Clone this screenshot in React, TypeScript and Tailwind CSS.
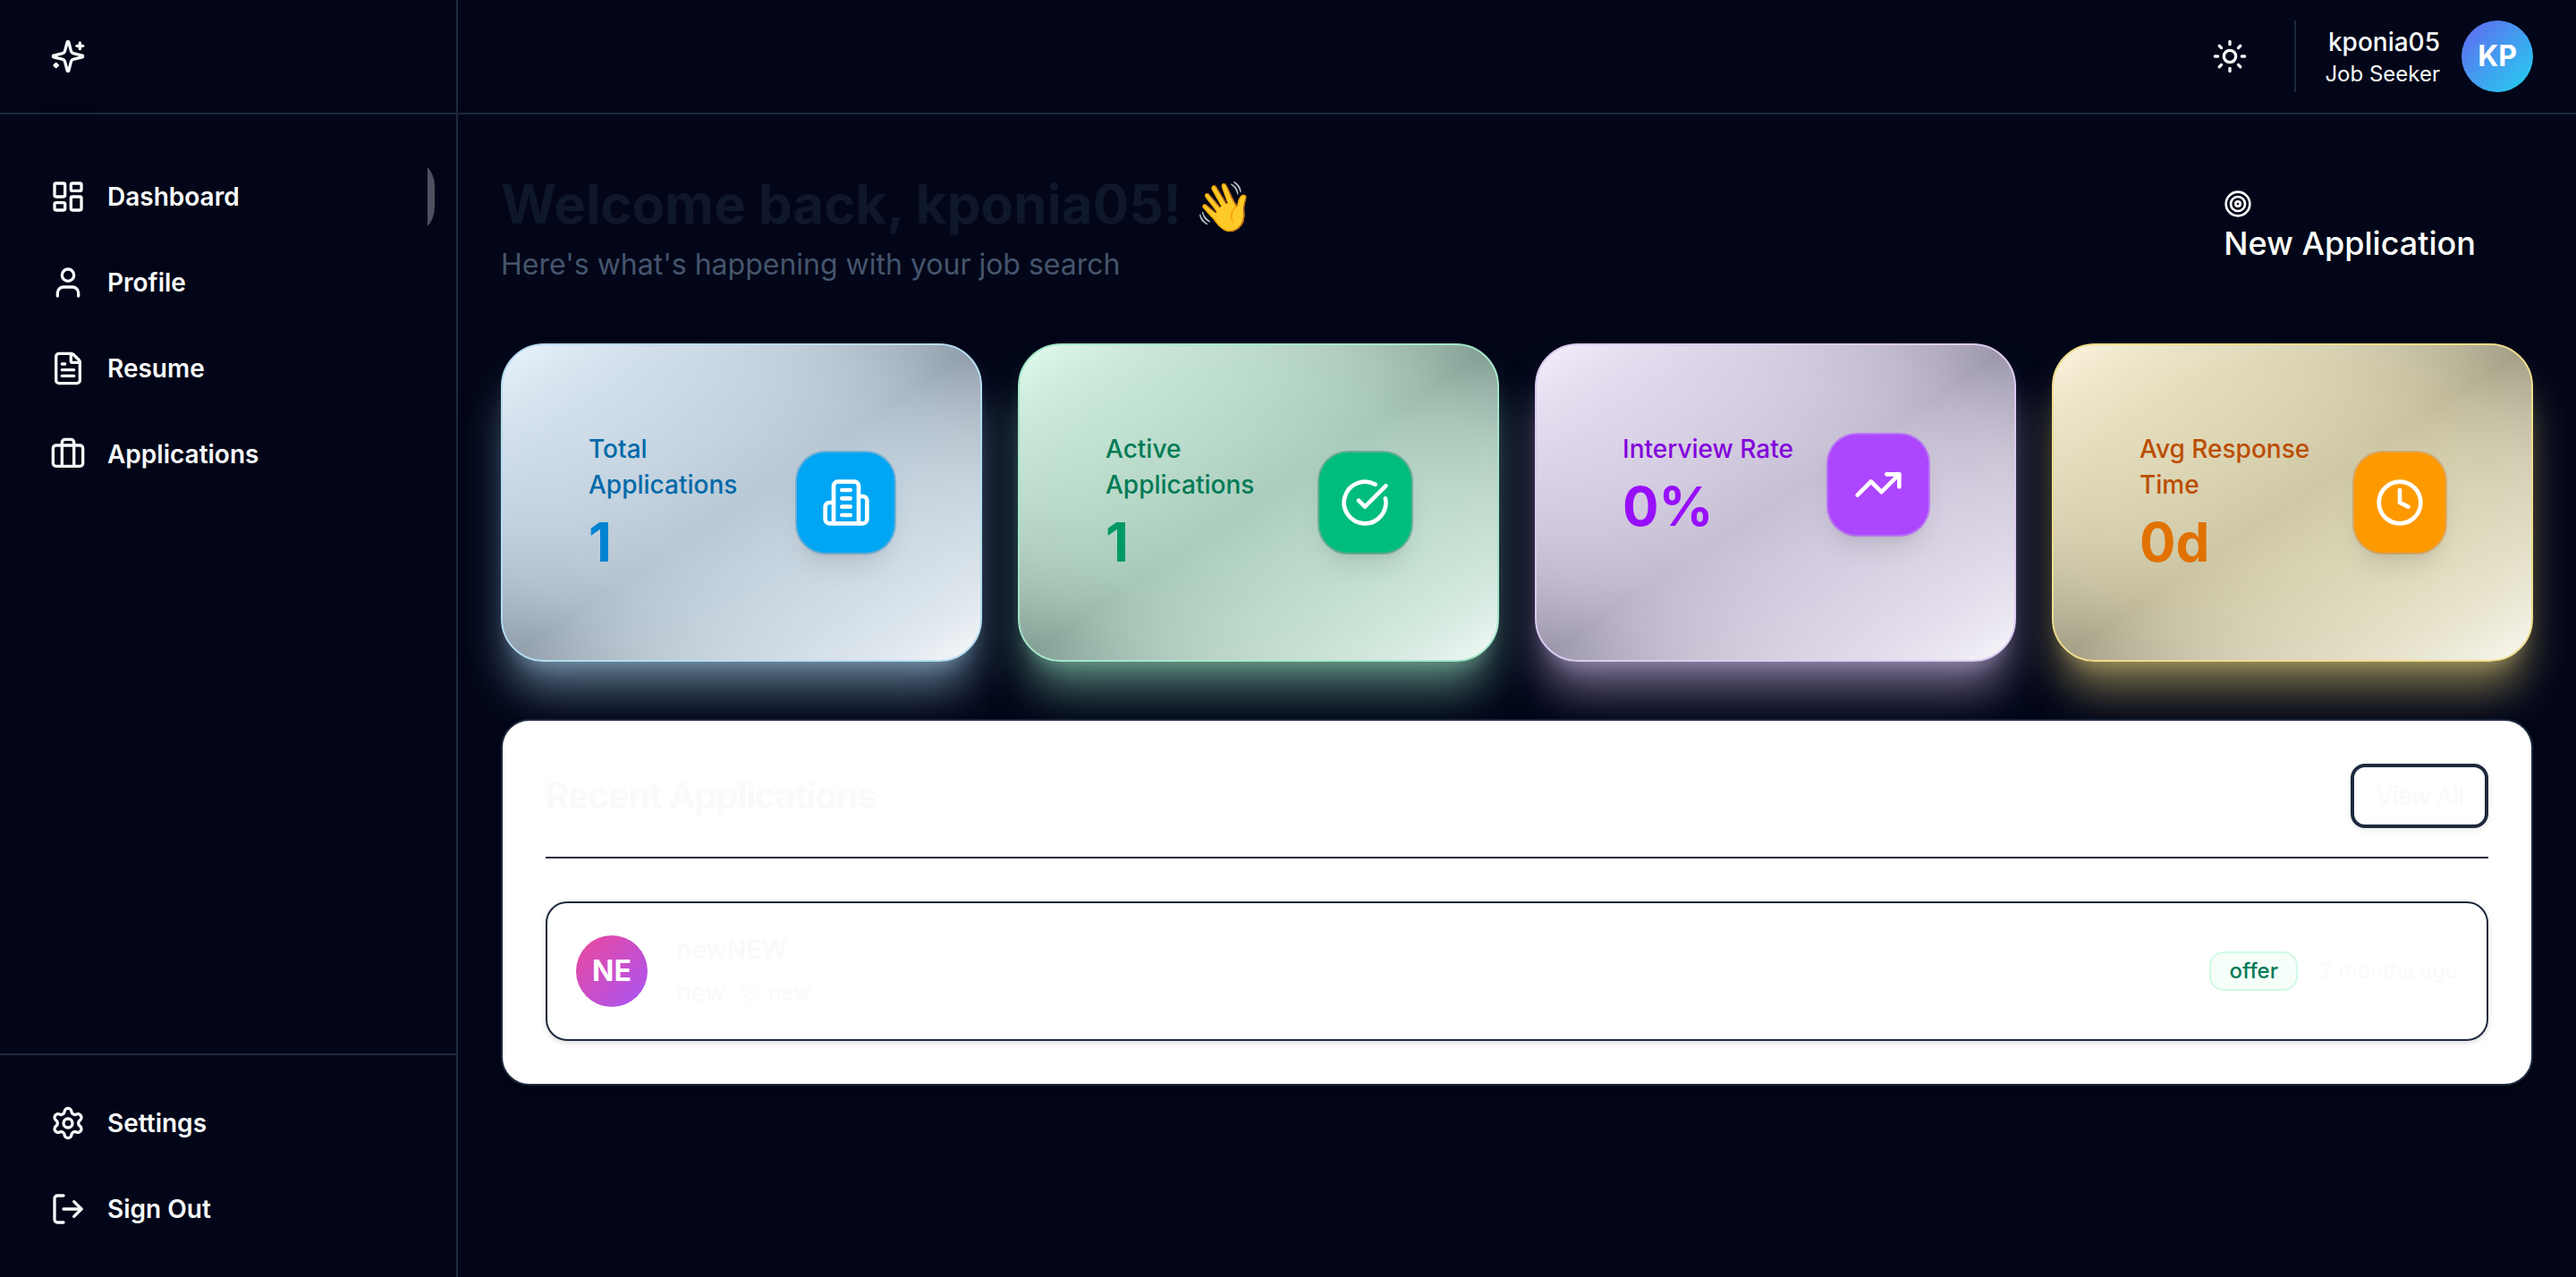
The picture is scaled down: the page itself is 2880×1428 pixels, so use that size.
import type { ReactNode, SVGProps } from "react";
import {
  Briefcase,
  Clock,
  FileText,
  LayoutDashboard,
  LogOut,
  MapPin,
  Settings,
  Sun,
  Target,
  TrendingUp,
  User,
  CircleCheckBig,
} from "lucide-react";

function LineIcon({ children, ...rest }: SVGProps<SVGSVGElement>) {
  return (
    <svg
      viewBox="0 0 24 24"
      fill="none"
      stroke="currentColor"
      strokeWidth={2}
      strokeLinecap="round"
      strokeLinejoin="round"
      aria-hidden="true"
      {...rest}
    >
      {children}
    </svg>
  );
}

function SparklesIcon({ className }: { className: string }) {
  return (
    <LineIcon className={className}>
      <path d="M9.937 15.5A2 2 0 0 0 8.5 14.063l-6.135-1.582a.5.5 0 0 1 0-.962L8.5 9.936A2 2 0 0 0 9.937 8.5l1.582-6.135a.5.5 0 0 1 .963 0L14.063 8.5A2 2 0 0 0 15.5 9.937l6.135 1.581a.5.5 0 0 1 0 .964L15.5 14.063a2 2 0 0 0-1.437 1.437l-1.582 6.135a.5.5 0 0 1-.963 0z" />
      <path d="M20 3v4" />
      <path d="M22 5h-4" />
      <path d="M4 17v2" />
      <path d="M5 18H3" />
    </LineIcon>
  );
}

function BuildingIcon({ className }: { className: string }) {
  return (
    <LineIcon className={className}>
      <path d="M6 22V4a2 2 0 0 1 2-2h8a2 2 0 0 1 2 2v18Z" />
      <path d="M6 12H4a2 2 0 0 0-2 2v6a2 2 0 0 0 2 2h2" />
      <path d="M18 9h2a2 2 0 0 1 2 2v9a2 2 0 0 1-2 2h-2" />
      <path d="M10 6h4" />
      <path d="M10 10h4" />
      <path d="M10 14h4" />
      <path d="M10 18h4" />
    </LineIcon>
  );
}

function NavLink({ icon, label, active = false }: { icon: ReactNode; label: string; active?: boolean }) {
  return (
    <a
      href="#"
      aria-current={active ? "page" : undefined}
      className={
        active
          ? "relative flex h-22 items-center gap-6 overflow-hidden rounded-[32px] px-8 text-[28px] leading-10 font-semibold text-white shadow-[0_20px_30px_-6px_rgba(0,0,0,0.2)]"
          : "flex h-22 items-center gap-6 rounded-[32px] px-8 text-[28px] leading-10 font-semibold text-slate-50"
      }
    >
      {icon}
      <span>{label}</span>
      {active && <span className="absolute inset-y-0 right-0 w-2 bg-white/30" />}
    </a>
  );
}

type Stat = {
  label: string;
  value: string;
  icon: ReactNode;
  card: string;
  labelColor: string;
  valueColor: string;
  box: string;
};

const stats: Stat[] = [
  {
    label: "Total Applications",
    value: "1",
    icon: <BuildingIcon className="size-14 shrink-0" />,
    card: "border-[#b5dcf2] bg-[radial-gradient(ellipse_at_center,rgba(222,240,252,0.55),rgba(222,240,252,0.54)_30%,rgba(222,240,252,0.48)_53%,rgba(222,240,252,0.36)_70%,rgba(222,240,252,0.12)_89%,rgba(222,240,252,0)),linear-gradient(to_bottom_right,#eaf5ff,#8c99a6,#f8fafc)] shadow-[0_40px_50px_-10px_rgba(184,230,254,0.5),0_16px_20px_-12px_rgba(184,230,254,0.3)]",
    labelColor: "text-sky-700",
    valueColor: "text-sky-600",
    box: "bg-sky-500 ring-sky-600/40",
  },
  {
    label: "Active Applications",
    value: "1",
    icon: <CircleCheckBig className="size-14 shrink-0" />,
    card: "border-[#a4e6c8] bg-[radial-gradient(ellipse_at_center,rgba(209,248,228,0.55),rgba(209,248,228,0.54)_30%,rgba(209,248,228,0.48)_53%,rgba(209,248,228,0.36)_70%,rgba(209,248,228,0.12)_89%,rgba(209,248,228,0)),linear-gradient(to_bottom_right,#e2fdef,#7f998f,#f4fcf8)] shadow-[0_40px_50px_-10px_rgba(164,244,207,0.5),0_16px_20px_-12px_rgba(164,244,207,0.3)]",
    labelColor: "text-emerald-700",
    valueColor: "text-emerald-600",
    box: "bg-emerald-500 ring-emerald-700/40",
  },
  {
    label: "Interview Rate",
    value: "0%",
    icon: <TrendingUp className="size-14 shrink-0" />,
    card: "border-[#dccaf2] bg-[radial-gradient(ellipse_at_center,rgba(240,230,252,0.55),rgba(240,230,252,0.54)_30%,rgba(240,230,252,0.48)_53%,rgba(240,230,252,0.36)_70%,rgba(240,230,252,0.12)_89%,rgba(240,230,252,0)),linear-gradient(to_bottom_right,#f7f0ff,#9691a5,#faf8fd)] shadow-[0_40px_50px_-10px_rgba(233,212,255,0.5),0_16px_20px_-12px_rgba(233,212,255,0.3)]",
    labelColor: "text-purple-700",
    valueColor: "text-purple-600",
    box: "bg-purple-500 ring-purple-500/60",
  },
  {
    label: "Avg Response Time",
    value: "0d",
    icon: <Clock className="size-14 shrink-0" />,
    card: "border-[#efdc8c] bg-[radial-gradient(ellipse_at_center,rgba(246,240,196,0.55),rgba(246,240,196,0.54)_30%,rgba(246,240,196,0.48)_53%,rgba(246,240,196,0.36)_70%,rgba(246,240,196,0.12)_89%,rgba(246,240,196,0)),linear-gradient(to_bottom_right,#fff6df,#9f9982,#fcfbf4)] shadow-[0_40px_50px_-10px_rgba(254,230,133,0.5),0_16px_20px_-12px_rgba(254,230,133,0.3)]",
    labelColor: "text-amber-700",
    valueColor: "text-amber-600",
    box: "bg-amber-500 ring-amber-600/40",
  },
];

function StatCard({ stat }: { stat: Stat }) {
  return (
    <article className={`rounded-[48px] border-2 p-24 ${stat.card}`}>
      <div className="flex items-center justify-between">
        <div>
          <p className={`text-[28px] leading-10 font-medium ${stat.labelColor}`}>{stat.label}</p>
          <p className={`mt-2 text-6xl leading-[72px] font-bold ${stat.valueColor}`}>{stat.value}</p>
        </div>
        <div
          className={`flex h-28 w-28 items-center justify-center rounded-[32px] text-white shadow-[0_20px_30px_-6px_rgba(0,0,0,0.1),0_8px_12px_-8px_rgba(0,0,0,0.1)] ring-2 ${stat.box}`}
        >
          {stat.icon}
        </div>
      </div>
    </article>
  );
}

export default function App() {
  return (
    <div className="flex min-h-screen bg-slate-950 font-['Inter',sans-serif] text-slate-50 antialiased">
      <aside className="flex w-128 shrink-0 flex-col border-r-2 border-slate-800">
        <div className="flex h-32 items-center border-b-2 border-slate-800 px-11">
          <a
            href="#"
            aria-label="Home"
            className="flex size-16 items-center justify-center rounded-[24px] shadow-[0_20px_30px_-6px_rgba(0,0,0,0.15)]"
          >
            <SparklesIcon className="size-10" />
          </a>
        </div>
        <nav className="flex grow flex-col gap-2 px-6 py-12">
          <NavLink active icon={<LayoutDashboard className="size-10" />} label="Dashboard" />
          <NavLink icon={<User className="size-10" />} label="Profile" />
          <NavLink icon={<FileText className="size-10" />} label="Resume" />
          <NavLink icon={<Briefcase className="size-10" />} label="Applications" />
        </nav>
        <div className="flex flex-col gap-2 border-t-2 border-slate-800 px-6 py-8">
          <NavLink icon={<Settings className="size-10" />} label="Settings" />
          <button
            type="button"
            className="flex h-22 items-center gap-6 rounded-[32px] px-8 text-[28px] leading-10 font-semibold text-slate-50"
          >
            <LogOut className="size-10" />
            <span>Sign Out</span>
          </button>
        </div>
      </aside>

      <div className="flex min-w-0 grow flex-col">
        <header className="flex h-32 items-center justify-end gap-8 border-b-2 border-slate-800 px-12">
          <button type="button" aria-label="Toggle theme" className="flex size-20 items-center justify-center rounded-3xl">
            <Sun className="size-10" />
          </button>
          <div className="flex h-20 items-center gap-6 border-l-2 border-slate-800 pl-8">
            <div className="text-right">
              <p className="text-[28px] leading-10 font-medium">kponia05</p>
              <p className="text-2xl leading-8">Job Seeker</p>
            </div>
            <div className="flex size-20 items-center justify-center rounded-full bg-linear-to-br/srgb from-[#6366f1] to-[#22d3ee] text-[32px] font-bold text-white">
              KP
            </div>
          </div>
        </header>

        <main className="flex flex-col gap-16 px-12 py-16">
          <section className="flex items-center justify-between">
            <div>
              <h1 className="text-6xl leading-[72px] font-bold text-slate-900">
                Welcome back, kponia05! <span className="text-[54px] leading-none">👋</span>
              </h1>
              <p className="mt-2 text-[32px] leading-12 text-slate-600">Here's what's happening with your job search</p>
            </div>
            <button
              type="button"
              className="flex h-24 flex-col items-start justify-center rounded-[32px] px-16 text-4xl leading-14 font-medium text-white shadow-[0_20px_30px_-6px_rgba(0,0,0,0.1)]"
            >
              <Target className="size-8 shrink-0" />
              New Application
            </button>
          </section>

          <section aria-label="Statistics" className="grid grid-cols-4 gap-10">
            {stats.map((stat) => (
              <StatCard key={stat.label} stat={stat} />
            ))}
          </section>

          <section className="relative rounded-[32px] border-2 border-slate-800 bg-white p-12 shadow-[0_8px_12px_rgba(0,0,0,0.3)]">
            <div className="flex items-center justify-between border-b-2 border-slate-800 pb-8 text-5xl tracking-tight">
              <h2 className="text-[40px] leading-14 font-bold">Recent Applications</h2>
              <button
                type="button"
                className="h-18 rounded-2xl border-4 border-slate-800 px-6 text-[28px] leading-10 font-medium shadow-[0_2px_6px_rgba(0,0,0,0.1)]"
              >
                View All
              </button>
            </div>
            <article className="mt-12 flex items-center justify-between rounded-3xl border-2 border-slate-800 p-8 shadow-[0_2px_6px_rgba(0,0,0,0.15)]">
              <div className="flex items-center gap-8">
                <div className="flex size-20 items-center justify-center rounded-full bg-linear-to-br/srgb from-[#ec4899] to-[#a855f7] text-[32px] font-bold text-white">
                  NE
                </div>
                <div>
                  <h3 className="text-[28px] leading-10 font-semibold">newNEW</h3>
                  <div className="mt-2 flex items-center gap-4">
                    <span className="text-[28px] leading-10">new</span>
                    <span className="flex items-center gap-2 text-2xl leading-8">
                      <MapPin className="size-6" />
                      new
                    </span>
                  </div>
                </div>
              </div>
              <div className="flex items-center gap-6 text-2xl leading-8">
                <span className="rounded-2xl border-2 border-emerald-100 bg-[#f5fef9] px-5 py-1 font-medium text-emerald-700">
                  offer
                </span>
                <span>2 months ago</span>
              </div>
            </article>
          </section>
        </main>
      </div>
    </div>
  );
}
